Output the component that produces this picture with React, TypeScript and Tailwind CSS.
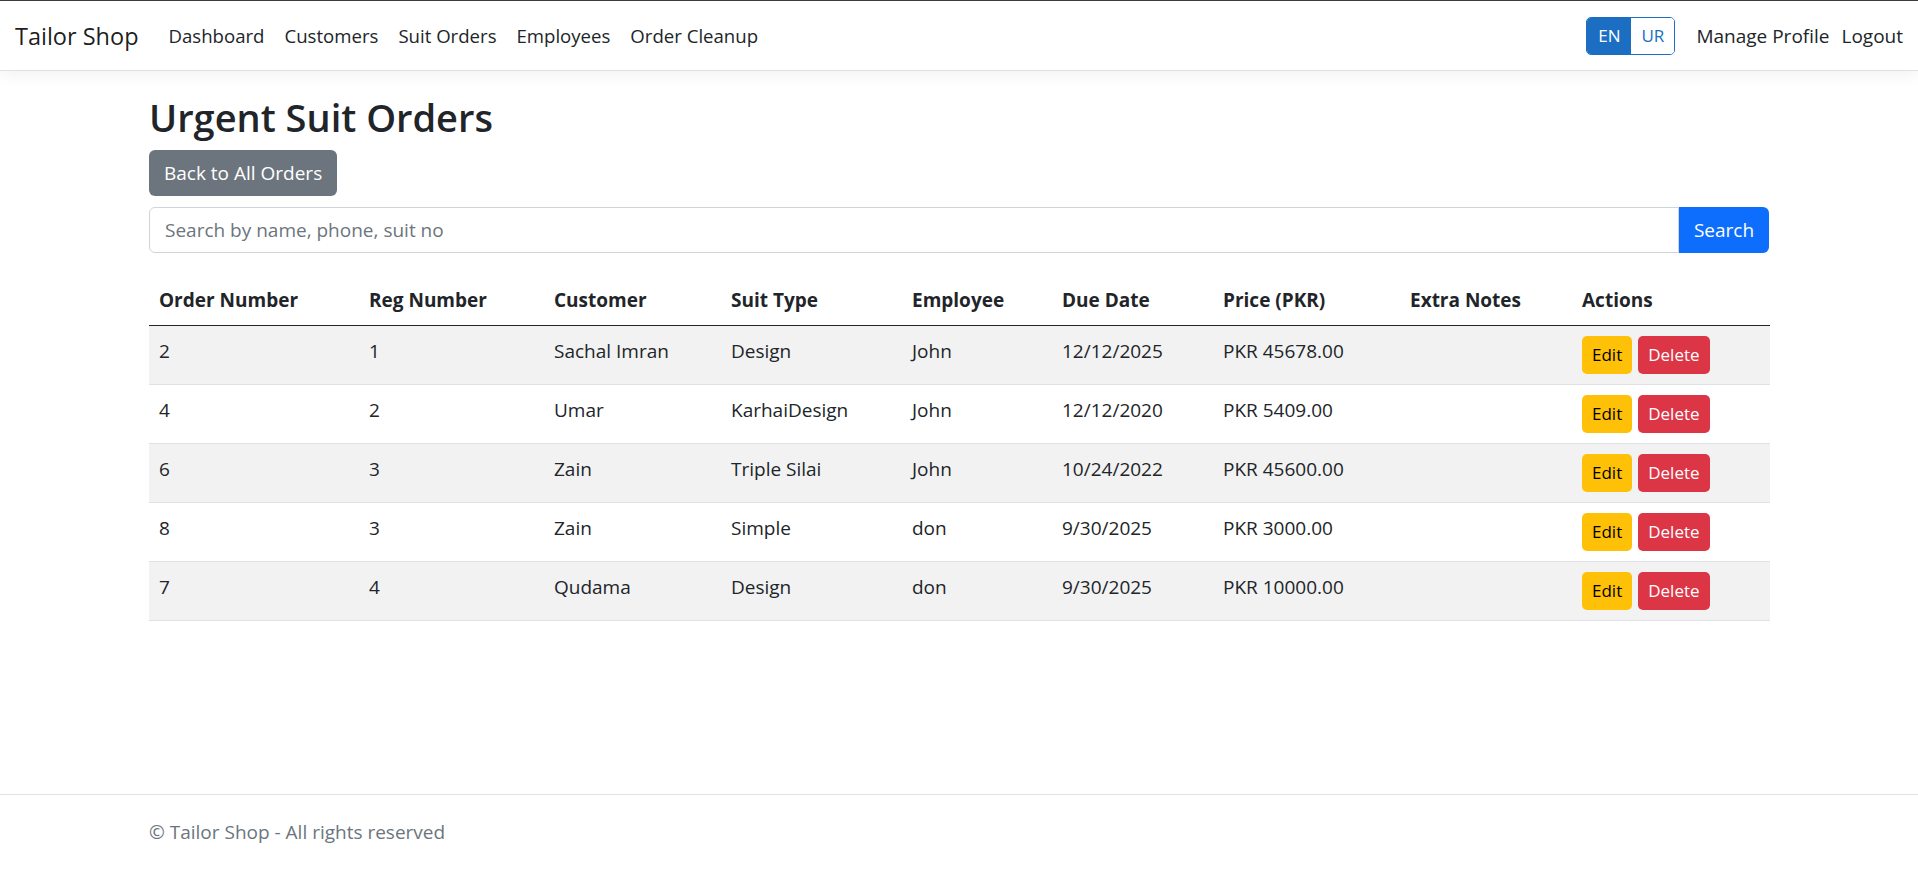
const ORDERS = [
  { order: "2", reg: "1", customer: "Sachal Imran", suit: "Design", employee: "John", due: "12/12/2025", price: "PKR 45678.00" },
  { order: "4", reg: "2", customer: "Umar", suit: "KarhaiDesign", employee: "John", due: "12/12/2020", price: "PKR 5409.00" },
  { order: "6", reg: "3", customer: "Zain", suit: "Triple Silai", employee: "John", due: "10/24/2022", price: "PKR 45600.00" },
  { order: "8", reg: "3", customer: "Zain", suit: "Simple", employee: "don", due: "9/30/2025", price: "PKR 3000.00" },
  { order: "7", reg: "4", customer: "Qudama", suit: "Design", employee: "don", due: "9/30/2025", price: "PKR 10000.00" },
];

const NAV = ["Dashboard", "Customers", "Suit Orders", "Employees", "Order Cleanup"];

export default function App() {
  return (
    <div
      className="flex min-h-screen flex-col bg-white text-[19px] leading-[30px] text-[#212529]"
      style={{ fontFamily: '"Open Sans", "Noto Sans", sans-serif' }}
    >
      {/* navbar */}
      <nav className="flex h-[71px] items-center border-t border-b border-t-[#3c3c3c] border-b-[#dee2e6] bg-white px-[15px] shadow-[0_5px_15px_rgba(0,0,0,0.05)]">
        <span className="mr-[20px] text-[23.5px] text-black/90">Tailor Shop</span>
        <div className="flex items-center text-[18.6px]">
          {NAV.map((item) => (
            <a key={item} className="px-[10px] text-[#212529]">
              {item}
            </a>
          ))}
        </div>
        <div className="ml-auto flex items-center">
          <div className="flex h-[38px] overflow-hidden rounded-[5px] border border-[#1b6ec2] text-[17px]">
            <span className="flex w-[44px] items-center justify-center bg-[#1b6ec2] text-white">EN</span>
            <span className="flex w-[43px] items-center justify-center bg-white text-[#1b6ec2]">UR</span>
          </div>
          <a className="ml-[21px] text-[#212529]">Manage Profile</a>
          <a className="ml-[12px] text-[#212529]">Logout</a>
        </div>
      </nav>

      <main className="mx-auto w-[1620px] flex-1 pt-[22px]">
        <h1 className="mb-[9px] text-[38px] font-semibold leading-[48px]">Urgent Suit Orders</h1>
        <button className="mb-[11px] h-[46px] rounded-[6px] bg-[#6c757d] px-[15px] text-white">Back to All Orders</button>

        <div className="mb-[22px] flex h-[46px]">
          <input
            className="flex-1 rounded-l-[6px] border border-[#ced4da] px-[15px] text-[#212529] outline-none placeholder:text-[#6c757d]"
            placeholder="Search by name, phone, suit no"
          />
          <button className="w-[90px] rounded-r-[6px] bg-[#0d6efd] text-white">Search</button>
        </div>

        <table className="w-full table-fixed border-collapse">
          <thead>
            <tr className="border-b border-[#212529] text-left font-bold">
              <th className="w-[210px] p-[10px]">Order Number</th>
              <th className="w-[185px] p-[10px]">Reg Number</th>
              <th className="w-[177px] p-[10px]">Customer</th>
              <th className="w-[181px] p-[10px]">Suit Type</th>
              <th className="w-[150px] p-[10px]">Employee</th>
              <th className="w-[161px] p-[10px]">Due Date</th>
              <th className="w-[187px] p-[10px]">Price (PKR)</th>
              <th className="w-[172px] p-[10px]">Extra Notes</th>
              <th className="w-[198px] p-[10px]">Actions</th>
            </tr>
          </thead>
          <tbody>
            {ORDERS.map((o, i) => (
              <tr key={i} className={`border-b border-[#dee2e6] align-top ${i % 2 === 0 ? "bg-[#f2f2f2]" : "bg-white"}`}>
                <td className="p-[10px]">{o.order}</td>
                <td className="p-[10px]">{o.reg}</td>
                <td className="p-[10px]">{o.customer}</td>
                <td className="p-[10px]">{o.suit}</td>
                <td className="p-[10px]">{o.employee}</td>
                <td className="p-[10px]">{o.due}</td>
                <td className="p-[10px]">{o.price}</td>
                <td className="p-[10px]"></td>
                <td className="p-[10px]">
                  <div className="flex gap-[6px]">
                    <button className="h-[38px] rounded-[5px] bg-[#ffc107] px-[10px] text-[17px] text-black">Edit</button>
                    <button className="h-[38px] rounded-[5px] bg-[#dc3545] px-[10px] text-[17px] text-white">Delete</button>
                  </div>
                </td>
              </tr>
            ))}
          </tbody>
        </table>
      </main>

      <footer className="h-[76px] border-t border-[#dee2e6]">
        <div className="mx-auto w-[1620px] leading-[75px] text-[#6c757d]">© Tailor Shop - All rights reserved</div>
      </footer>
    </div>
  );
}
